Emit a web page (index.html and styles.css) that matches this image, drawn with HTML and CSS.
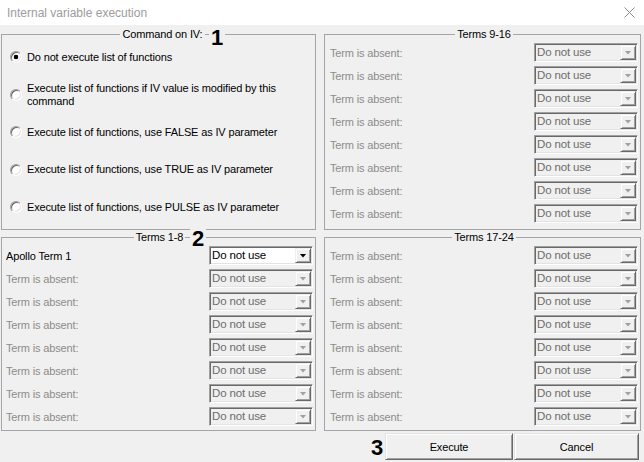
FILE: index.html
```html
<!DOCTYPE html>
<html>
<head>
<meta charset="utf-8">
<title>Internal variable execution</title>
<link rel="stylesheet" href="styles.css">
</head>
<body>
<div class="window">
  <div class="titlebar">
    <span class="title">Internal variable execution</span>
    <svg class="close" width="11" height="11" viewBox="0 0 11 11"><path d="M0.5 0.5L10.5 10.5M10.5 0.5L0.5 10.5"/></svg>
  </div>
  <div class="content">
    <fieldset class="group cmd">
      <legend>Command on IV:</legend>
      <div class="radio-row"><span class="radio checked"></span><span>Do not execute list of functions</span></div>
      <div class="radio-row"><span class="radio"></span><span>Execute list of functions if IV value is modified by this<br>command</span></div>
      <div class="radio-row"><span class="radio"></span><span>Execute list of functions, use FALSE as IV parameter</span></div>
      <div class="radio-row"><span class="radio"></span><span>Execute list of functions, use TRUE as IV parameter</span></div>
      <div class="radio-row"><span class="radio"></span><span>Execute list of functions, use PULSE as IV parameter</span></div>
    </fieldset>
    <fieldset class="group terms right">
      <legend>Terms 9-16</legend>
      <div class="term"><span class="label">Term is absent:</span><div class="combo"><span class="value">Do not use</span><span class="drop"></span></div></div>
      <div class="term"><span class="label">Term is absent:</span><div class="combo"><span class="value">Do not use</span><span class="drop"></span></div></div>
      <div class="term"><span class="label">Term is absent:</span><div class="combo"><span class="value">Do not use</span><span class="drop"></span></div></div>
      <div class="term"><span class="label">Term is absent:</span><div class="combo"><span class="value">Do not use</span><span class="drop"></span></div></div>
      <div class="term"><span class="label">Term is absent:</span><div class="combo"><span class="value">Do not use</span><span class="drop"></span></div></div>
      <div class="term"><span class="label">Term is absent:</span><div class="combo"><span class="value">Do not use</span><span class="drop"></span></div></div>
      <div class="term"><span class="label">Term is absent:</span><div class="combo"><span class="value">Do not use</span><span class="drop"></span></div></div>
      <div class="term"><span class="label">Term is absent:</span><div class="combo"><span class="value">Do not use</span><span class="drop"></span></div></div>
    </fieldset>
    <fieldset class="group terms">
      <legend>Terms 1-8</legend>
      <div class="term enabled"><span class="label">Apollo Term 1</span><div class="combo"><span class="value">Do not use</span><span class="drop"></span></div></div>
      <div class="term"><span class="label">Term is absent:</span><div class="combo"><span class="value">Do not use</span><span class="drop"></span></div></div>
      <div class="term"><span class="label">Term is absent:</span><div class="combo"><span class="value">Do not use</span><span class="drop"></span></div></div>
      <div class="term"><span class="label">Term is absent:</span><div class="combo"><span class="value">Do not use</span><span class="drop"></span></div></div>
      <div class="term"><span class="label">Term is absent:</span><div class="combo"><span class="value">Do not use</span><span class="drop"></span></div></div>
      <div class="term"><span class="label">Term is absent:</span><div class="combo"><span class="value">Do not use</span><span class="drop"></span></div></div>
      <div class="term"><span class="label">Term is absent:</span><div class="combo"><span class="value">Do not use</span><span class="drop"></span></div></div>
      <div class="term"><span class="label">Term is absent:</span><div class="combo"><span class="value">Do not use</span><span class="drop"></span></div></div>
    </fieldset>
    <fieldset class="group terms right">
      <legend>Terms 17-24</legend>
      <div class="term"><span class="label">Term is absent:</span><div class="combo"><span class="value">Do not use</span><span class="drop"></span></div></div>
      <div class="term"><span class="label">Term is absent:</span><div class="combo"><span class="value">Do not use</span><span class="drop"></span></div></div>
      <div class="term"><span class="label">Term is absent:</span><div class="combo"><span class="value">Do not use</span><span class="drop"></span></div></div>
      <div class="term"><span class="label">Term is absent:</span><div class="combo"><span class="value">Do not use</span><span class="drop"></span></div></div>
      <div class="term"><span class="label">Term is absent:</span><div class="combo"><span class="value">Do not use</span><span class="drop"></span></div></div>
      <div class="term"><span class="label">Term is absent:</span><div class="combo"><span class="value">Do not use</span><span class="drop"></span></div></div>
      <div class="term"><span class="label">Term is absent:</span><div class="combo"><span class="value">Do not use</span><span class="drop"></span></div></div>
      <div class="term"><span class="label">Term is absent:</span><div class="combo"><span class="value">Do not use</span><span class="drop"></span></div></div>
    </fieldset>
  </div>
  <div class="buttons">
    <button class="btn execute">Execute</button>
    <button class="btn cancel">Cancel</button>
  </div>
  <span class="mark mark1">1</span>
  <span class="mark mark2">2</span>
  <span class="mark mark3">3</span>
</div>
</body>
</html>
```

FILE: styles.css
```css
* {
  box-sizing: border-box;
}

html,
body {
  margin: 0;
  padding: 0;
}

body {
  width: 644px;
  height: 462px;
  overflow: hidden;
  background: #f0f0f0;
  font-family: "Liberation Sans", Arial, sans-serif;
  font-size: 11px;
  letter-spacing: -0.15px;
  color: #000;
}

.window {
  position: relative;
  width: 644px;
  height: 462px;
}

.titlebar {
  height: 25px;
  background: #fff;
  display: flex;
  align-items: center;
  justify-content: space-between;
  padding: 0 9px 0 7px;
}

.title {
  font-family: "Liberation Sans", Arial, sans-serif;
  font-size: 12px;
  letter-spacing: 0;
  color: #9c9c9c;
}

.close {
  stroke: #8a8a8a;
  stroke-width: 1;
  fill: none;
}

.content {
  display: grid;
  grid-template-columns: 315px 317px;
  grid-template-rows: 202px 200px;
  column-gap: 8px;
  row-gap: 1px;
  padding: 3px 0 0 1px;
}

.group {
  margin: 0;
  min-width: 0;
  border: 1px solid #a5a5a5;
}

.group legend {
  margin: 0 auto;
  padding: 0 2px;
  font-size: 11px;
  line-height: 13px;
}

/* Command group */
.cmd {
  display: flex;
  flex-direction: column;
  gap: 11.5px;
  padding: 3px 0 0 8px;
}

.radio-row {
  height: 26px;
  display: flex;
  align-items: center;
  gap: 5px;
  line-height: 13px;
}

.radio {
  flex: none;
  width: 12px;
  height: 12px;
  border-radius: 50%;
  border: 1px solid;
  border-color: #a0a0a0 #fff #fff #a0a0a0;
  background: #fff;
  box-shadow: inset 1px 1px 0 #696969, inset -1px -1px 0 #e3e3e3;
}

.radio.checked {
  background: radial-gradient(circle, #000 0 2px, #fff 2.6px);
}

/* Terms groups */
.terms {
  display: flex;
  flex-direction: column;
  gap: 4px;
  padding: 2px 2px 0 4px;
}

.terms.right {
  padding-left: 5px;
}

.term {
  height: 19px;
  display: flex;
  align-items: center;
  justify-content: space-between;
}

.label {
  color: #8c8c8c;
}

.combo {
  width: 104px;
  height: 19px;
  display: flex;
  border: 1px solid;
  border-color: #a0a0a0 #fff #fff #a0a0a0;
  box-shadow: inset 1px 1px 0 #696969, inset -1px -1px 0 #e3e3e3;
  padding: 1px;
  background: #f0f0f0;
}

.value {
  flex: 1;
  padding-left: 1px;
  line-height: 15px;
  font-size: 11.5px;
  color: #6d6d6d;
}

.drop {
  flex: none;
  width: 16px;
  height: 15px;
  display: flex;
  align-items: center;
  justify-content: center;
  background: #f0f0f0;
  border: 1px solid;
  border-color: #f0f0f0 #696969 #696969 #f0f0f0;
  box-shadow: inset 1px 1px 0 #fff, inset -1px -1px 0 #a0a0a0;
}

.drop::after {
  content: "";
  width: 7px;
  height: 4px;
  background: #a0a0a0;
  clip-path: polygon(0 0, 100% 0, 50% 100%);
}

.term.enabled .label {
  color: #000;
}

.term.enabled .combo {
  background: #fff;
}

.term.enabled .value {
  color: #000;
}

.term.enabled .drop::after {
  background: #000;
}

/* Buttons */
.buttons {
  display: flex;
  justify-content: flex-end;
  gap: 1px;
  padding: 2px 5px 0 0;
}

.btn {
  height: 27px;
  margin: 0;
  padding: 0;
  font-family: "Liberation Sans", Arial, sans-serif;
  font-size: 11px;
  letter-spacing: -0.15px;
  color: #000;
  background: #f0f0f0;
  border: 1px solid;
  border-color: #e3e3e3 #696969 #696969 #e3e3e3;
  box-shadow: inset 1px 1px 0 #fff, inset -1px -1px 0 #a0a0a0;
}

.execute {
  width: 128px;
}

.cancel {
  width: 125px;
}

/* Annotation numbers */
.mark {
  position: absolute;
  font-family: "Liberation Sans", Arial, sans-serif;
  font-weight: bold;
  font-size: 22px;
  line-height: 22px;
  letter-spacing: 0;
  background: #f0f0f0;
  padding: 0 2px;
}

.mark1 {
  left: 209px;
  top: 27px;
}

.mark2 {
  left: 190px;
  top: 228px;
}

.mark3 {
  left: 369px;
  top: 437px;
}
```
